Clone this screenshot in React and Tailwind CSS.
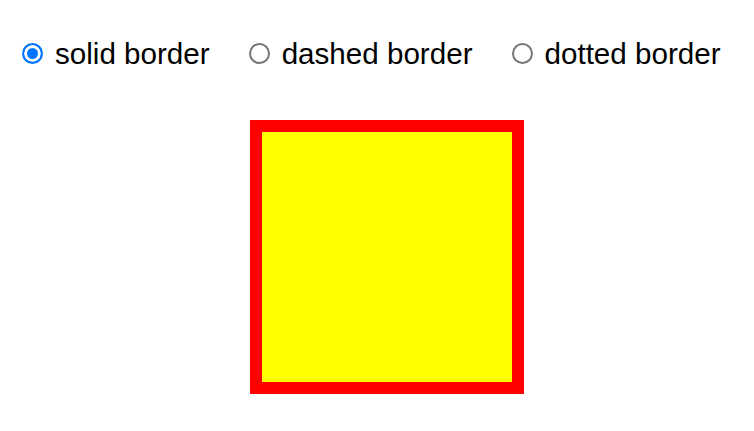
import React, { useState } from "react";

export default function App() {
  const [style, setStyle] = useState("solid");
  const opts = [
    ["solid", "solid border"],
    ["dashed", "dashed border"],
    ["dotted", "dotted border"],
  ];
  const borderCls =
    style === "solid" ? "border-solid" : style === "dashed" ? "border-dashed" : "border-dotted";
  return (
    <div className="w-[754px] h-[431px] bg-white text-black" style={{ fontFamily: '"Liberation Sans", Arial, sans-serif' }}>
      <div className="flex items-center pl-[22px] pt-[35px] h-[72px] gap-[39px] text-[29.6px] leading-none">
        {opts.map(([v, label]) => (
          <label key={v} className="flex items-center gap-[12px] cursor-pointer">
            <input
              type="radio"
              name="b"
              checked={style === v}
              onChange={() => setStyle(v)}
              className="appearance-none shrink-0 block w-[21px] h-[21px] m-0 p-0 rounded-full border-2 border-[#767676] bg-white checked:border-[#0075ff] checked:bg-[#0075ff] checked:shadow-[inset_0_0_0_3px_#ffffff]"
            />
            <span>{label}</span>
          </label>
        ))}
      </div>
      <div className="pt-[48px] pl-[250px]">
        <div className={`w-[274px] h-[274px] bg-[#ffff00] border-[12px] border-[#ff0000] ${borderCls}`} />
      </div>
    </div>
  );
}
